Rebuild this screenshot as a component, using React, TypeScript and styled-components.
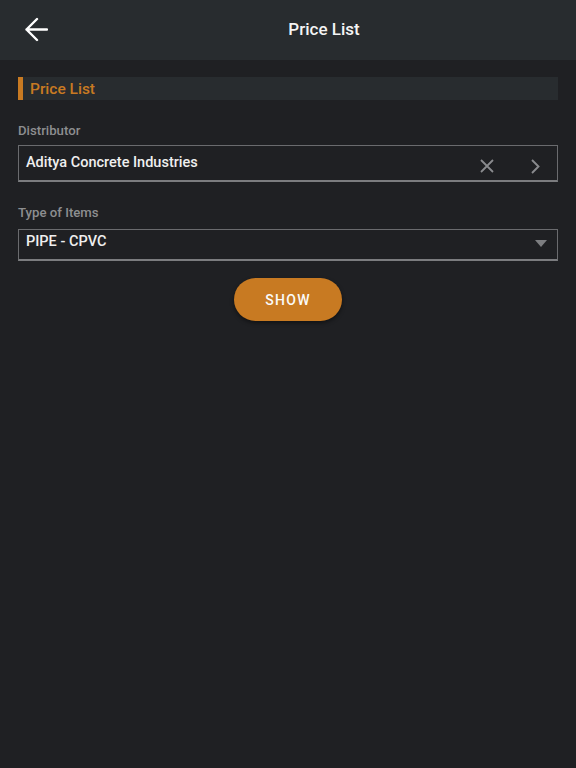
import React from "react";
import styled, { createGlobalStyle } from "styled-components";

const Global = createGlobalStyle`
  html, body { margin: 0; padding: 0; background: #1f2023; }
  body { font-family: Roboto, "Noto Sans", "Liberation Sans", sans-serif; }
  * { box-sizing: border-box; }
`;

const Page = styled.div`
  width: 576px;
  min-height: 768px;
  background: #1f2023;
  display: flex;
  flex-direction: column;
`;

const TopBar = styled.header`
  height: 60px;
  background: #282c2f;
  display: flex;
  align-items: center;
`;

const BackButton = styled.button`
  width: 72px;
  height: 60px;
  border: 0;
  background: transparent;
  padding: 0 0 0 24px;
  display: flex;
  align-items: center;
  cursor: pointer;
`;

const Title = styled.h1`
  flex: 1;
  margin: 0;
  text-align: center;
  color: #f4f4f4;
  font-size: 17px;
  font-weight: 500;
  padding-bottom: 2px;
`;

const Content = styled.main`
  padding: 17px 18px 0;
  display: flex;
  flex-direction: column;
`;

const SectionBar = styled.div`
  height: 23px;
  background: #282c2f;
  border-left: 5px solid #c87a22;
  display: flex;
  align-items: center;
  padding-left: 7px;
  color: #c87a22;
  font-size: 15.5px;
  font-weight: 500;
`;

const Field = styled.div<{ $top: number }>`
  display: flex;
  flex-direction: column;
  margin-top: ${(p) => p.$top}px;
`;

const Label = styled.label<{ $gap: number }>`
  color: #8d8e90;
  font-size: 13.2px;
  line-height: 16px;
  font-weight: 500;
  margin-bottom: ${(p) => p.$gap}px;
`;

const InputBox = styled.div<{ $h: number }>`
  height: ${(p) => p.$h}px;
  border: 1px solid #6a6b6e;
  border-bottom: 2px solid #7b7c7f;
  display: flex;
  align-items: flex-start;
  padding-left: 7px;
`;

const Value = styled.span<{ $pt: number }>`
  flex: 1;
  color: #efefef;
  font-size: 14.5px;
  line-height: 18px;
  font-weight: 500;
  padding-top: ${(p) => p.$pt}px;
`;

const IconSlot = styled.span<{ $pt: number; $w: number }>`
  width: ${(p) => p.$w}px;
  display: flex;
  justify-content: center;
  padding-top: ${(p) => p.$pt}px;
`;

const ShowButton = styled.button`
  align-self: center;
  margin-top: 17px;
  width: 108px;
  height: 43px;
  border: 0;
  border-radius: 22px;
  background: #c87a22;
  color: #fafafa;
  font-family: Roboto, "Liberation Sans", sans-serif;
  font-size: 14px;
  font-weight: 500;
  letter-spacing: 1.3px;
  box-shadow: 0 2px 4px rgba(0, 0, 0, 0.45);
  cursor: pointer;
`;

export default function App() {
  return (
    <>
      <Global />
      <Page>
        <TopBar>
          <BackButton aria-label="Back">
            <svg width="24" height="26" viewBox="0 0 24 26">
              <path d="M23 12.5H2.5M13 2L2.5 12.5 13 23" fill="none" stroke="#fff" strokeWidth="2.4" strokeLinecap="round" strokeLinejoin="round" />
            </svg>
          </BackButton>
          <Title>Price List</Title>
        </TopBar>
        <Content>
          <SectionBar>Price List</SectionBar>
          <Field $top={23}>
            <Label $gap={6}>Distributor</Label>
            <InputBox $h={37}>
              <Value $pt={8}>Aditya Concrete Industries</Value>
              <IconSlot $pt={13} $w={52}>
                <svg width="14" height="14" viewBox="0 0 14 14">
                  <path d="M1 1L13 13M13 1L1 13" stroke="#8a8b8e" strokeWidth="1.8" />
                </svg>
              </IconSlot>
              <IconSlot $pt={13} $w={44}>
                <svg width="10" height="15" viewBox="0 0 10 15">
                  <path d="M2 1l6.5 6.5L2 14" fill="none" stroke="#8a8b8e" strokeWidth="1.9" />
                </svg>
              </IconSlot>
            </InputBox>
          </Field>
          <Field $top={23}>
            <Label $gap={8}>Type of Items</Label>
            <InputBox $h={32}>
              <Value $pt={3}>PIPE - CPVC</Value>
              <IconSlot $pt={10} $w={32}>
                <svg width="12" height="7" viewBox="0 0 12 7">
                  <path d="M0 0h12L6 7z" fill="#7d7e81" />
                </svg>
              </IconSlot>
            </InputBox>
          </Field>
          <ShowButton>SHOW</ShowButton>
        </Content>
      </Page>
    </>
  );
}
